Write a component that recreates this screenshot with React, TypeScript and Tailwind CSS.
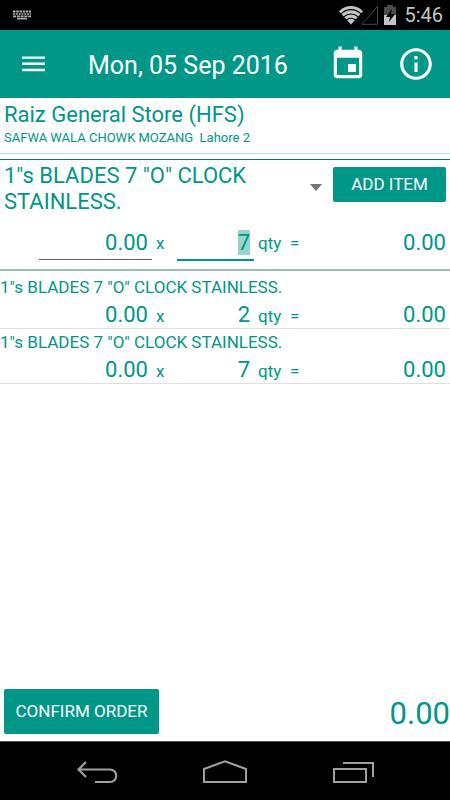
import { useEffect, useRef, useState } from 'react';

const PRODUCTS = ['1"s BLADES 7 "O" CLOCK STAINLESS.'];

interface OrderItem {
  id: number;
  name: string;
  price: string;
  qty: string;
  total: string;
}

const ITEMS: OrderItem[] = [
  { id: 1, name: PRODUCTS[0], price: '0.00', qty: '2', total: '0.00' },
  { id: 2, name: PRODUCTS[0], price: '0.00', qty: '7', total: '0.00' },
];

function KeyboardIcon() {
  return (
    <svg width="18" height="10" viewBox="0 0 18 10" fill="none" stroke="#b0b0b0" aria-hidden="true">
      <path d="M0 1.5h18" strokeWidth="2" strokeDasharray="2.5 0.7" />
      <path d="M0 4h18" strokeWidth="1.6" strokeDasharray="2 0.8" />
      <path d="M0 6.4h18" strokeWidth="1.6" strokeDasharray="3 0.8" />
      <path d="M4 8.6h10" strokeWidth="1.6" />
    </svg>
  );
}

function StatusBar() {
  return (
    <div className="flex h-[30px] items-center bg-black pl-[13px] pr-[7px] text-[#c4c4c4]">
      <KeyboardIcon />
      <div className="ml-auto flex items-center">
        <svg width="24" height="20" viewBox="0 0 24 20" fill="none" aria-hidden="true">
          <path d="M0 6.2C7 -0.6 17 -0.6 24 6.2L12 19.5Z" fill="#c4c4c4" />
          <path d="M2 8.8C8 3.2 16 3.2 22 8.8M4.7 11.9C9 8 15 8 19.3 11.9M7.3 15C10 12.6 14 12.6 16.7 15" stroke="#000" strokeWidth="1.1" />
        </svg>
        <svg className="-ml-[2px]" width="18" height="20" viewBox="0 0 18 20" fill="none" stroke="#444" aria-hidden="true">
          <path d="M0.8 19.3L16.5 1.2V19.3Z" />
        </svg>
        <svg className="ml-1" width="14" height="20" viewBox="0 0 14 20" aria-hidden="true">
          <path d="M4 0h6v2h3v9H1V2h3z" fill="#4c4c4c" />
          <path d="M1 10h12v10H1z" fill="#c4c4c4" />
          <path d="M9 4L3 12h4l-1 5 6-8H8z" fill="#000" />
        </svg>
        <span className="ml-[7px] text-[20px] leading-6">5:46</span>
      </div>
    </div>
  );
}

function AppBar() {
  return (
    <header className="flex h-[68px] items-center bg-[#009688] pl-5 pr-[15px] text-white">
      <button type="button" aria-label="Menu" className="flex size-7 items-center justify-center">
        <svg width="24" height="16" viewBox="0 0 24 16" stroke="currentColor" strokeWidth="2.4" aria-hidden="true">
          <path d="M0 1.6h23M0 7.8h23M0 14h23" />
        </svg>
      </button>
      <h1 className="ml-10 flex-1 pt-1 text-[25px] leading-8">Mon, 05 Sep 2016</h1>
      <button type="button" aria-label="Pick date" className="shrink-0">
        <svg width="38" height="38" viewBox="0 0 24 24" fill="currentColor" aria-hidden="true">
          <path d="M17 12h-5v5h5v-5zM16 1v2H8V1H6v2H5c-1.11 0-1.99.9-1.99 2L3 19c0 1.1.89 2 2 2h14c1.1 0 2-.9 2-2V5c0-1.1-.9-2-2-2h-1V1h-2zm3 18H5V8h14v11z" />
        </svg>
      </button>
      <button type="button" aria-label="Info" className="ml-[30px] shrink-0">
        <svg width="38" height="38" viewBox="0 0 24 24" fill="currentColor" aria-hidden="true">
          <path d="M11 17h2v-6h-2v6zm1-15C6.48 2 2 6.48 2 12s4.48 10 10 10 10-4.48 10-10S17.52 2 12 2zm0 18c-4.41 0-8-3.59-8-8s3.59-8 8-8 8 3.59 8 8-3.59 8-8 8zM11 9h2V7h-2v2z" />
        </svg>
      </button>
    </header>
  );
}

function ItemForm() {
  const [product, setProduct] = useState(PRODUCTS[0]);
  const [price, setPrice] = useState('0.00');
  const [qty, setQty] = useState('7');
  const qtyRef = useRef<HTMLInputElement>(null);

  useEffect(() => {
    qtyRef.current?.focus();
    qtyRef.current?.select();
  }, []);

  return (
    <form className="border-t border-b-2 border-t-[#00796b] border-b-[#9bbfb7]" onSubmit={(e) => e.preventDefault()}>
      <div className="flex items-start px-1 pt-[3px]">
        {/* the select sits on top so the long product name can wrap */}
        <div className="relative flex flex-1 items-center">
          <span className="flex-1 pr-10 text-[22px] leading-[26px]" aria-hidden="true">{product}</span>
          <svg className="mr-[11px] mb-1 shrink-0" width="12" height="7" viewBox="0 0 12 7" fill="#757575" aria-hidden="true">
            <path d="M0 0h12L6 7z" />
          </svg>
          <select
            aria-label="Product"
            value={product}
            onChange={(e) => setProduct(e.target.value)}
            className="absolute inset-0 w-full cursor-pointer opacity-0"
          >
            {PRODUCTS.map((name) => (
              <option key={name}>{name}</option>
            ))}
          </select>
        </div>
        <button type="submit" className="mt-1 h-[35px] w-[113px] rounded-xs bg-[#009688] text-[17px] text-white">
          ADD ITEM
        </button>
      </div>
      <div className="mt-3 flex items-start pb-2 pl-[39px] pr-1">
        <input
          aria-label="Price"
          value={price}
          onChange={(e) => setPrice(e.target.value)}
          className="h-[33px] w-[113px] border-b border-[#616161] pb-[2px] pr-1 text-right text-[22px] leading-7 outline-none"
        />
        <span className="w-[25px] pl-1 pt-1 text-[17px] leading-6">x</span>
        <input
          ref={qtyRef}
          id="qty"
          value={qty}
          onChange={(e) => setQty(e.target.value)}
          className="h-[34px] w-[77px] border-b-2 border-[#009688] pb-[2px] pr-1 text-right text-[22px] leading-7 outline-none selection:bg-[#99d5cf] selection:text-[#009688]"
        />
        <label htmlFor="qty" className="w-9 pl-1 pt-1 text-[17px] leading-6">qty</label>
        <span className="pt-1 text-[17px] leading-6">=</span>
        <output className="flex-1 pt-[2px] text-right text-[22px] leading-7">0.00</output>
      </div>
    </form>
  );
}

function ItemRow({ item }: { item: OrderItem }) {
  return (
    <li className="border-b border-[#e0e0e0]">
      <p className="text-[17px] leading-[26px]">{item.name}</p>
      <div className="flex h-7 items-start pl-[39px] pr-1 text-[22px] leading-[30px]">
        <span className="w-[113px] pr-1 text-right">{item.price}</span>
        <span className="w-[25px] pl-1 pt-1 text-[17px] leading-6">x</span>
        <span className="w-[77px] pr-1 text-right">{item.qty}</span>
        <span className="w-9 pl-1 pt-1 text-[17px] leading-6">qty</span>
        <span className="pt-1 text-[17px] leading-6">=</span>
        <span className="flex-1 text-right">{item.total}</span>
      </div>
    </li>
  );
}

function NavBar() {
  return (
    <nav className="flex h-[59px] items-center justify-center gap-[83px] border-t border-[#555] bg-black pt-[2px] text-[#a0a0a0]">
      <button type="button" aria-label="Back">
        <svg width="44" height="24" viewBox="0 0 44 24" fill="none" stroke="currentColor" strokeWidth="2.2" aria-hidden="true">
          <path d="M11 2L3.5 9.5L11 17M3.5 9.5H35a6 6 0 0 1 0 12.5H20" />
        </svg>
      </button>
      <button type="button" aria-label="Home">
        <svg width="46" height="24" viewBox="0 0 46 24" fill="none" stroke="currentColor" strokeWidth="2" aria-hidden="true">
          <path d="M2 22V9L23 1.2L44 9V22Z" />
        </svg>
      </button>
      <button type="button" aria-label="Recent apps">
        <svg width="44" height="24" viewBox="0 0 44 24" fill="none" stroke="currentColor" strokeWidth="2" aria-hidden="true">
          <path d="M3 9H35V22H3ZM12 3H42V17" />
        </svg>
      </button>
    </nav>
  );
}

export default function App() {
  return (
    <div className="flex min-h-screen flex-col bg-white font-[Roboto,sans-serif] text-[#009688]">
      <StatusBar />
      <AppBar />
      <section className="mb-[5px] border-b border-[#b2dfdb] px-1 pb-[6px] pt-[3px]">
        <h2 className="text-[22px] leading-7">Raiz General Store (HFS)</h2>
        <p className="whitespace-pre text-[13px] leading-[18px]">SAFWA WALA CHOWK MOZANG  Lahore 2</p>
      </section>
      <ItemForm />
      <ul className="flex-1 pt-[3px]">
        {ITEMS.map((item) => (
          <ItemRow key={item.id} item={item} />
        ))}
      </ul>
      <footer className="flex items-center justify-between pb-[7px] pl-1">
        <button type="button" className="h-[45px] w-[155px] rounded-xs bg-[#009688] text-[17px] text-white">
          CONFIRM ORDER
        </button>
        <output className="pt-1 text-[31px] leading-9">0.00</output>
      </footer>
      <NavBar />
    </div>
  );
}
